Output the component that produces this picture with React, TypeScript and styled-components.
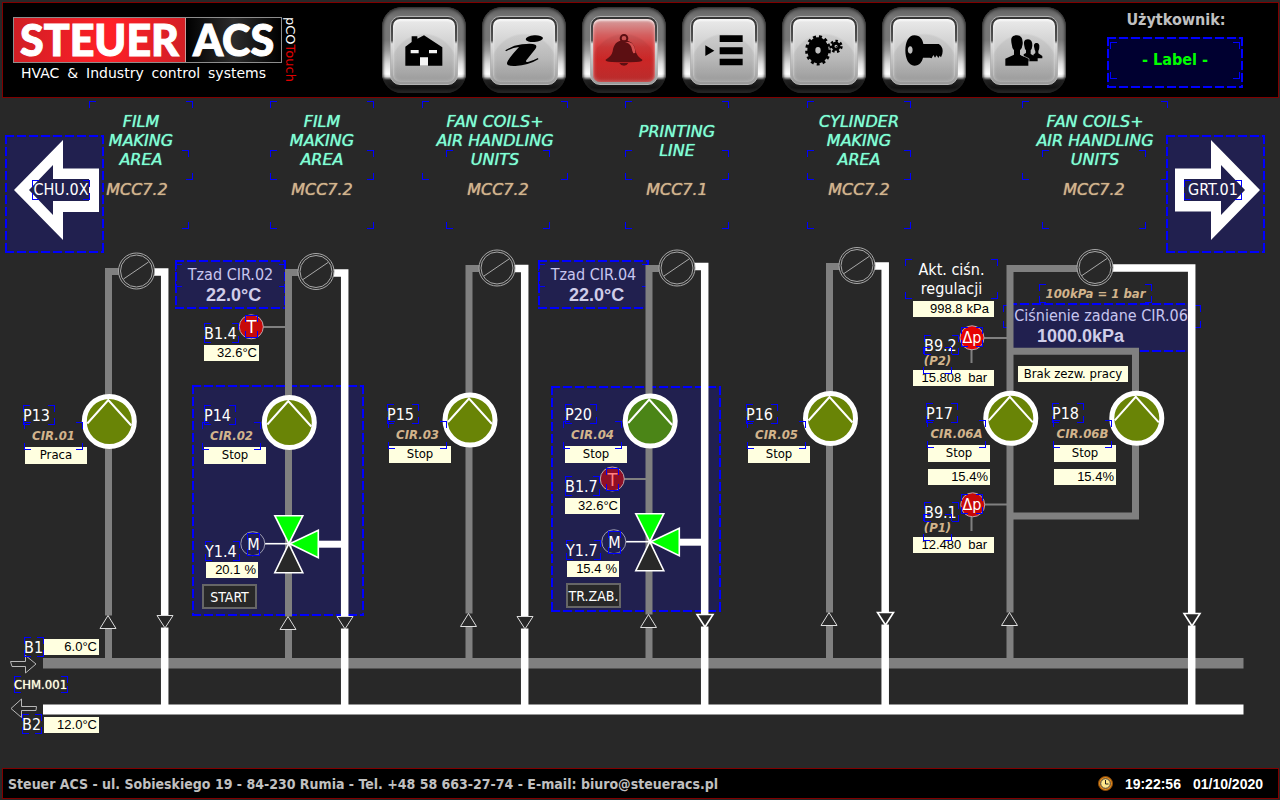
import React from "react";
import styled, { createGlobalStyle, css } from "styled-components";

const UI = '"DejaVu Sans Condensed", "DejaVu Sans", sans-serif';
const WIDE = '"DejaVu Sans", sans-serif';
const DIGITS = '"Liberation Sans", Arial, sans-serif';
const BG = "#282828";
const PANEL = "#21204f";
const BLUE = "#0000ff";
const TAN = "#d2b48c";

const GlobalStyle = createGlobalStyle`
  * { box-sizing: border-box; }
  body { margin: 0; background: ${BG}; color: #fff; font-family: ${UI}; font-size: 16px; }
  button { font: inherit; color: inherit; padding: 0; border: 0; cursor: pointer; }
`;

/* Eight short strokes that mark the four corners of a field */
const corners = css`
  background-image: ${Array(8).fill(`linear-gradient(${BLUE}, ${BLUE})`).join(", ")};
  background-repeat: no-repeat;
  background-size: 7px 1px, 1px 7px, 7px 1px, 1px 7px, 7px 1px, 1px 7px, 7px 1px, 1px 7px;
  background-position: 0 0, 0 0, 100% 0, 100% 0, 0 100%, 0 100%, 100% 100%, 100% 100%;
`;

/* Two pixel dashed outline drawn on the panel's own background */
const dashes = css`
  background-image:
    repeating-linear-gradient(90deg, ${BLUE} 0 9px, transparent 9px 12px),
    repeating-linear-gradient(90deg, ${BLUE} 0 9px, transparent 9px 12px),
    repeating-linear-gradient(180deg, ${BLUE} 0 9px, transparent 9px 12px),
    repeating-linear-gradient(180deg, ${BLUE} 0 9px, transparent 9px 12px);
  background-repeat: no-repeat;
  background-size: 100% 2px, 100% 2px, 2px 100%, 2px 100%;
  background-position: 0 0, 0 100%, 0 0, 100% 0;
`;

const Page = styled.div`
  min-height: 100vh;
  display: flex;
  flex-direction: column;
`;

/* ---------- header ---------- */

const Header = styled.header`
  margin: 2px 1px 0 2px;
  border: 1px solid #800000;
  background: #000;
  display: flex;
  align-items: flex-start;
  padding: 4px 35px 4px 10px;
`;

const Brand = styled.div`
  display: flex;
  align-items: flex-start;
  gap: 3px;
  padding-top: 10px;
  margin-right: auto;
`;

const LogoBox = styled.div`
  display: flex;
  height: 46px;
  border: 1px solid #8d8d8d;
`;

const LogoWord = styled.span<{ $dark?: boolean }>`
  display: flex;
  align-items: center;
  justify-content: center;
  width: ${(p) => (p.$dark ? 95 : 172)}px;
  border-right: ${(p) => (p.$dark ? "0" : "1px solid #c99")};
  background: ${(p) =>
    p.$dark
      ? "linear-gradient(90deg, #000 0, #2c2c2c 50%, #000 100%)"
      : "linear-gradient(100deg, #cf1f25 0, #ff1f27 55%, #cf1f25 100%)"};
  font: 900 43px/44px Lato, sans-serif;
  -webkit-text-stroke: 1px #fff;
`;

const Tagline = styled.div`
  display: flex;
  justify-content: space-between;
  margin: 1px 16px 0 8px;
  font: 14px/18px ${WIDE};
`;

const Product = styled.div`
  writing-mode: vertical-rl;
  font: 13px/11px ${WIDE};
  span { color: #e00000; }
`;

const Toolbar = styled.nav`
  display: flex;
  gap: 16px;
`;

const Key = styled.button`
  width: 84px;
  height: 86px;
  padding: 9px 8px 8px;
  border-radius: 20px;
  background: linear-gradient(#5a5a5a 0, #777 12%, #777 38%, #999 50%, #ddd 66%, #fff 78%, #ddd 81%, #222 85%, #111 94%, #2a2a2a 100%);
  box-shadow: inset 0 0 3px 1px #222;
`;

const KeyRing = styled.span`
  display: block;
  height: 69px;
  padding: 2px;
  border: 1px solid #b4b4b4;
  border-radius: 10px;
  background: linear-gradient(#333 0, #555 35%, #ddd 40%, #999 100%);
`;

const KeyFace = styled.span<{ $alarm?: boolean }>`
  height: 63px;
  display: flex;
  align-items: center;
  justify-content: center;
  border-radius: 7px;
  box-shadow: inset 0 2px 2px rgba(255, 255, 255, 0.6), inset 0 0 4px rgba(255, 255, 255, 0.4);
  background:
    radial-gradient(ellipse 36px 40px at 50% 86%, rgba(0, 0, 0, 0.06) 95%, transparent 100%),
    ${(p) =>
      p.$alarm
        ? "linear-gradient(#d6a0a0 0, #d46060 25%, #d43a3a 45%, #d82828 65%, #c43030 100%)"
        : "linear-gradient(#eaeaea 0, #d4d4d4 35%, #c6c6c6 60%, #a4a4a4 100%)"};
`;

const UserPanel = styled.div`
  width: 136px;
  margin-left: 41px;
  text-align: center;
  font-weight: bold;
  line-height: 26px;
`;

const UserCaption = styled.div`
  color: #c0c0c0;
  margin: 0 0 4px 2px;
`;

const UserField = styled.button`
  display: block;
  width: 100%;
  height: 51px;
  padding: 5px 3px 9px;
  background-color: #000030;
  ${dashes}
`;

const UserName = styled.span`
  display: block;
  height: 37px;
  line-height: 36px;
  font-weight: bold;
  color: #00ff00;
  ${corners}
`;

/* ---------- schematic ---------- */

const Stage = styled.main`
  position: relative;
  flex: 1;
  min-height: 670px;
  overflow: hidden;
`;

const Drawing = styled.svg`
  position: absolute;
  left: 0;
  top: 0;
`;

interface Place { $x: number; $y: number; $w?: number; $h?: number }

/* Schematic coordinates count from the top of the screen; the stage starts below the header */
const STAGE_TOP = 98;

const place = css<Place>`
  position: absolute;
  left: ${(p) => p.$x}px;
  top: ${(p) => p.$y - STAGE_TOP}px;
  width: ${(p) => (p.$w ? p.$w + "px" : "auto")};
  height: ${(p) => (p.$h ? p.$h + "px" : "auto")};
`;

const Region = styled.div<Place>`
  ${place}
  background-color: ${PANEL};
  ${dashes}
`;

const Field = styled.div<Place & { $center?: boolean }>`
  ${place}
  display: flex;
  align-items: center;
  justify-content: ${(p) => (p.$center ? "center" : "flex-start")};
  text-align: center;
  line-height: 19px;
  white-space: pre;
  ${corners}
`;

const AreaTitle = styled(Field)`
  font-family: ${WIDE};
  font-style: italic;
  color: #7fffd4;
  text-shadow: 0 0 1px currentColor;
`;

const Cabinet = styled(AreaTitle)`
  color: ${TAN};
`;

const Tag = styled(Field)`
  font-size: 13px;
  font-weight: bold;
  font-style: italic;
  line-height: 16px;
  color: ${TAN};
`;

const SmallField = styled(Field)`
  font-size: 13px;
  color: #ffffe0;
  text-shadow: 0 0 1px currentColor;
`;

const Letter = styled(Field)<{ $dim?: boolean; $large?: boolean }>`
  color: ${(p) => (p.$dim ? "#ff8080" : "#fff")};
  font-size: ${(p) => (p.$large ? 18 : 16)}px;
`;

const Value = styled.output<Place & { $gap?: number; $pad?: number }>`
  ${place}
  display: flex;
  justify-content: flex-end;
  gap: ${(p) => p.$gap ?? 4}px;
  padding: 0 ${(p) => p.$pad ?? 2}px 0 2px;
  background: #ffffe0;
  color: #000;
  font: 13px/16px ${DIGITS};
  white-space: nowrap;
`;

const State = styled(Value)`
  justify-content: center;
  font-family: ${UI};
`;

const Setpoint = styled.button<Place>`
  ${place}
  display: flex;
  flex-direction: column;
  align-items: flex-start;
  background-color: ${PANEL};
  color: #c8c6f0;
  ${dashes}
`;

const SetpointName = styled.span<{ $plain?: boolean }>`
  align-self: stretch;
  margin-top: ${(p) => (p.$plain ? 2 : 4)}px;
  padding-left: ${(p) => (p.$plain ? 4 : 0)}px;
  height: 23px;
  line-height: 21px;
  white-space: nowrap;
  ${(p) => !p.$plain && corners}
`;

const SetpointValue = styled.span<{ $indent: number }>`
  font: bold 18px/16px ${DIGITS};
  color: #d0cee8;
  padding-left: ${(p) => p.$indent}px;
`;

const CommandButton = styled.button<Place>`
  ${place}
  border: 2px solid #666;
  background: ${BG};
  font-size: 14px;
  line-height: 20px;
  white-space: nowrap;
`;

const NavButton = styled.button<Place>`
  ${place}
  background-color: ${PANEL};
  ${dashes}
`;

const NavLabel = styled.span<{ $left: number }>`
  position: absolute;
  left: ${(p) => p.$left}px;
  top: 45px;
  width: 58px;
  height: 20px;
  line-height: 20px;
  ${corners}
`;

/* ---------- footer ---------- */

const Footer = styled.footer`
  margin: 0 1px 1px 2px;
  height: 31px;
  border: 1px solid #800000;
  background: #000;
  display: flex;
  align-items: center;
  padding: 0 15px 0 5px;
  gap: 12px;
  font-size: 14px;
  font-weight: bold;
`;

const Address = styled.address`
  font-style: normal;
  color: #c0c0c0;
  margin-right: auto;
`;

const Clock = styled.time`
  font-family: ${DIGITS};
`;

/* ---------- icons ---------- */

const gearTeeth = (r: number, n: number) => `${(Math.PI * r) / n} ${(Math.PI * r) / n}`;

const glyphs: { name: string; art: React.ReactNode }[] = [
  {
    name: "Home",
    art: (
      <>
        <path d="M105 196V139L124 125V108H141V115L161 105L216 141V196Z" />
        <path d="M121 149h24v10h-24zM176 149h24v10h-24zM149 171h24v25h-24z" fill="#f4f4f4" />
      </>
    ),
  },
  {
    name: "Info",
    art: (
      <>
        <ellipse cx="192" cy="115" rx="26" ry="10" transform="rotate(-4 192 115)" />
        <path d="M105 150Q125 136 155 132Q185 128 195 133Q201 137 195 146L168 180Q164 187 175 184Q190 180 203 173L204 177Q175 195 135 197Q108 198 110 188Q113 178 128 160L146 140Q126 142 107 153Z" />
      </>
    ),
  },
  {
    name: "Alarms",
    art: (
      <g fill="#5c0f12">
        <circle cx="161" cy="114" r="10" fill="none" stroke="#5c0f12" strokeWidth="6" />
        <path d="M161 120C137 120 130 135 127 153Q124 168 106 178Q103 183 125 185Q161 187 197 185Q219 183 216 178Q199 168 195 150Q190 120 161 120Z" />
        <path d="M164 126Q178 128 183 140Q186 154 189 159L195 158Q194 136 184 129Q175 123 164 126Z" fill="#d65050" />
        <path d="M147 188H174Q170 196 161 196Q151 196 147 188Z" />
      </g>
    ),
  },
  {
    name: "Menu",
    art: <path d="M105 135L132 151L105 167ZM148 105h69v20h-69zM148 141h69v21h-69zM148 175h69v20h-69z" />,
  },
  {
    name: "Settings",
    art: (
      <>
        <path fillRule="evenodd" d="M111 150a32 39 0 1 0 64 0a32 39 0 1 0-64 0ZM135 150a8 10 0 1 1 16 0a8 10 0 1 1-16 0Z" />
        <ellipse cx="143" cy="150" rx="34" ry="41" fill="none" stroke="#000" strokeWidth="9" strokeDasharray={gearTeeth(37, 13)} />
        <circle cx="197" cy="138" r="9" fill="none" stroke="#000" strokeWidth="9" />
        <circle cx="197" cy="138" r="16" fill="none" stroke="#000" strokeWidth="8" strokeDasharray={gearTeeth(16, 7)} />
        <circle cx="198" cy="139" r="2" />
      </>
    ),
  },
  {
    name: "Login",
    art: (
      <path
        fillRule="evenodd"
        d="M132 105C150 105 157 118 159 131H205Q217 138 217 152Q217 163 212 171L208 166L204 173L199 165L194 172L189 164L184 174L178 172H158C155 184 148 196 132 196C114 196 105 174 105 150C105 126 114 105 132 105ZM120 138C110 138 110 160 120 160C129 160 129 138 120 138Z"
      />
    ),
  },
  {
    name: "Users",
    art: (
      <>
        <path d="M199 128C190 128 190 136 192 143Q193 150 195 152V158L189 163V174H216V167L204 159V152Q207 148 207 140Q208 129 199 128Z" />
        <path d="M173 117C160 117 160 126 162 137Q163 146 167 150V158L160 162V183H202V173L181 161V150Q185 146 186 136Q187 118 173 117Z" />
        <path d="M140 105C122 105 121 117 124 131Q125 144 131 150V163L105 175V196H174V176L149 163V150Q156 144 157 131Q159 106 140 105Z" />
        <path d="M151 163L176 175V183" fill="none" stroke="#bbb" strokeWidth="2" />
      </>
    ),
  },
];

/* ---------- diagram parts ---------- */

const Pump = ({ x, y, fill = "#698406" }: { x: number; y: number; fill?: string }) => (
  <g transform={`translate(${x} ${y})`} stroke="#fff">
    <circle r="25" fill={fill} strokeWidth="5" />
    <path d="M-22 2L-1 -21.5L22 4" fill="none" strokeWidth="2" />
  </g>
);

const Exchanger = ({ x, y }: { x: number; y: number }) => (
  <g transform={`translate(${x} ${y})`} fill={BG} stroke="#a8a8a8">
    <circle r="18" />
    <circle r="16" />
    <path d="M-13 8L12 -9" />
  </g>
);

const Mixer = ({ x, y }: { x: number; y: number }) => (
  <g transform={`translate(${x} ${y})`} stroke="#fff" strokeWidth="1.6">
    <path d="M30 0.5H53" strokeWidth="7" />
    <path d="M-24 0H0" />
    <path d="M-14 -28H14L0 0Z" fill="#00ff00" />
    <path d="M-14 29H14L0 0Z" fill={BG} />
    <path d="M29.5 -13.5V14L1 0Z" fill="#00ff00" />
    <circle cx="-36" r="12" fill="none" stroke="#9a9ab0" strokeWidth="1" />
  </g>
);

const Flow = ({ x, y, down, bright }: { x: number; y: number; down?: boolean; bright?: boolean }) => (
  <path
    transform={`translate(${x} ${y})`}
    d={down ? "M-8 0H8L0 12.5Z" : "M-8 13H8L0 0Z"}
    fill={BG}
    stroke={bright ? "#fff" : "#ddd"}
    strokeWidth={bright ? 1.6 : 1}
  />
);

const Sensor = ({ x, y, fill }: { x: number; y: number; fill: string }) => (
  <circle cx={x} cy={y} r="12" fill={fill} stroke="#b8a8b0" />
);

interface Circuit {
  title: string; cabinet: string; tx: number; tw: number; cx: number;
  grey: number; white: number; greyTop: number; whiteTop: number; ex: number; ey: number;
  px: number; py: number; fill?: string; upY: number; downY: number;
}

const circuits: Circuit[] = [
  { title: "FILM\nMAKING\nAREA", cabinet: "MCC7.2", tx: 89, tw: 104, cx: 85, grey: 105, white: 161, greyTop: 268, whiteTop: 268, ex: 136.5, ey: 271, px: 109.3, py: 421.5, upY: 615.5, downY: 615.5 },
  { title: "FILM\nMAKING\nAREA", cabinet: "MCC7.2", tx: 270, tw: 104, cx: 270, grey: 285, white: 341, greyTop: 269, whiteTop: 269, ex: 316, ey: 271.5, px: 289.3, py: 422.5, upY: 616.5, downY: 616.5 },
  { title: "FAN COILS+\nAIR HANDLING\nUNITS", cabinet: "MCC7.2", tx: 422, tw: 146, cx: 446, grey: 465.5, white: 521, greyTop: 265, whiteTop: 264.5, ex: 497, ey: 268, px: 470, py: 420, upY: 613.5, downY: 616.5 },
  { title: "PRINTING\nLINE", cabinet: "MCC7.1", tx: 625, tw: 104, cx: 625, grey: 645.5, white: 701, greyTop: 265, whiteTop: 262.5, ex: 677, ey: 268, px: 650.2, py: 421, fill: "#4b8517", upY: 614.5, downY: 614.5 },
  { title: "CYLINDER\nMAKING\nAREA", cabinet: "MCC7.2", tx: 807, tw: 104, cx: 807, grey: 826, white: 881.5, greyTop: 263, whiteTop: 262, ex: 857, ey: 265.5, px: 830.5, py: 418.5, upY: 612.5, downY: 612.5 },
  { title: "FAN COILS+\nAIR HANDLING\nUNITS", cabinet: "MCC7.2", tx: 1022, tw: 146, cx: 1042, grey: 1006.5, white: 1188, greyTop: 265, whiteTop: 264, ex: 1095, ey: 267.5, px: 1010.8, py: 418.3, upY: 612.5, downY: 613.5 },
];

const pumps = [
  { name: "P13", tag: "CIR.01", state: "Praca", x: 23, y: 405, tagX: 24, stateX: 25 },
  { name: "P14", tag: "CIR.02", state: "Stop", x: 204, y: 405, tagX: 202, stateX: 204 },
  { name: "P15", tag: "CIR.03", state: "Stop", x: 387, y: 404, tagX: 388, stateX: 389 },
  { name: "P20", tag: "CIR.04", state: "Stop", x: 565, y: 404, tagX: 563, stateX: 565 },
  { name: "P16", tag: "CIR.05", state: "Stop", x: 746, y: 404, tagX: 747, stateX: 748 },
  { name: "P17", tag: "CIR.06A", state: "Stop", x: 926, y: 403, tagX: 927, stateX: 928, load: "15.4" },
  { name: "P18", tag: "CIR.06B", state: "Stop", x: 1052, y: 403, tagX: 1053, stateX: 1054, load: "15.4" },
];

const points = [
  { name: "B1.4", x: 204, y: 323 },
  { name: "B1.7", x: 565, y: 476 },
  { name: "Y1.4", x: 205, y: 541 },
  { name: "Y1.7", x: 566, y: 540 },
  { name: "B9.2", x: 924, y: 335 },
  { name: "B9.1", x: 924, y: 502 },
];

const readings = [
  { value: "32.6°C", x: 204, y: 345, w: 55 },
  { value: "32.6°C", x: 565, y: 498, w: 55 },
  { value: "6.0°C", x: 44, y: 639, w: 55 },
  { value: "12.0°C", x: 44, y: 717, w: 55 },
  { value: "20.1", unit: "%", x: 206, y: 562, w: 52 },
  { value: "15.4", unit: "%", x: 567, y: 561, w: 52 },
  { value: "998.8", unit: "kPa", x: 913, y: 301, w: 81, pad: 5 },
  { value: "15.808", unit: "bar", x: 913, y: 370, w: 81, pad: 7, gap: 7 },
  { value: "12.480", unit: "bar", x: 913, y: 537, w: 81, pad: 7, gap: 7 },
];

export default function App() {
  return (
    <Page>
      <GlobalStyle />
      <Header>
        <Brand>
          <div>
            <LogoBox>
              <LogoWord>STEUER</LogoWord>
              <LogoWord $dark>ACS</LogoWord>
            </LogoBox>
            <Tagline>
              <span>HVAC</span>
              <span>&amp;</span>
              <span>Industry</span>
              <span>control</span>
              <span>systems</span>
            </Tagline>
          </div>
          <Product>pCO<span>Touch</span></Product>
        </Brand>
        <Toolbar>
          {glyphs.map((g) => (
            <Key key={g.name} type="button" aria-label={g.name}>
              <KeyRing>
                <KeyFace $alarm={g.name === "Alarms"}>
                  <svg width="40" height="33" viewBox="101 101 120 99">{g.art}</svg>
                </KeyFace>
              </KeyRing>
            </Key>
          ))}
        </Toolbar>
        <UserPanel>
          <UserCaption>Użytkownik:</UserCaption>
          <UserField type="button">
            <UserName>- Label -</UserName>
          </UserField>
        </UserPanel>
      </Header>

      <Stage>
        <Region $x={192} $y={385} $w={172} $h={231} />
        <Region $x={551} $y={386} $w={170} $h={226} />

        <Setpoint type="button" $x={175} $y={260} $w={111} $h={49}>
          <SetpointName>Tzad CIR.02</SetpointName>
          <SetpointValue $indent={31}>22.0°C</SetpointValue>
        </Setpoint>
        <Setpoint type="button" $x={538} $y={260} $w={111} $h={49}>
          <SetpointName>Tzad CIR.04</SetpointName>
          <SetpointValue $indent={31}>22.0°C</SetpointValue>
        </Setpoint>
        <Setpoint type="button" $x={1008} $y={303} $w={182} $h={49}>
          <SetpointName $plain>Ciśnienie zadane CIR.06</SetpointName>
          <SetpointValue $indent={29}>1000.0kPa</SetpointValue>
        </Setpoint>
        <Field $x={1003} $y={305} $w={198} $h={23} />

        <Drawing width="1280" height="670" viewBox="0 98 1280 670" aria-hidden="true">
          <path d="M43 663.3H1243.5" stroke="#808080" strokeWidth="10.5" />
          <path d="M43 709.6H1243.5" stroke="#fff" strokeWidth="10" />
          <g stroke="#808080" fill="none">
            <path d="M1010 351.3H1135.5V516H1010" strokeWidth="7" />
            <path d="M262 327H286M624 479H646M984 338H1007M984 504.5H1007M971.5 350V363M971.5 517V531" strokeWidth="2" />
          </g>
          {circuits.map((c) => (
            <g key={c.grey}>
              <path d={`M${c.ex - 17} ${c.greyTop + 3.5}H${c.grey + 3.5}V660`} fill="none" stroke="#808080" strokeWidth="7" />
              <path d={`M${c.ex + 17} ${c.whiteTop + 4}H${c.white + 3.7}V706`} fill="none" stroke="#fff" strokeWidth="7.5" />
              <path d={`M${c.grey + 3.5} ${c.upY}v13M${c.white + 4} ${c.downY}v12`} stroke={BG} strokeWidth="9" />
              <Exchanger x={c.ex} y={c.ey} />
              <Flow x={c.grey + 3} y={c.upY} />
              <Flow x={c.white + 4} y={c.downY} down bright={c.white > 600} />
            </g>
          ))}
          <Mixer x={288.8} y={543.7} />
          <Mixer x={649.8} y={541.7} />
          {circuits.map((c) => <Pump key={c.px} x={c.px} y={c.py} fill={c.fill} />)}
          <Pump x={1136.8} y={418.3} />
          <Sensor x={251.3} y={326.8} fill="#c80a0a" />
          <Sensor x={612.3} y={479} fill="#8f0f26" />
          <Sensor x={972} y={337.8} fill="#e60202" />
          <Sensor x={972.7} y={504.8} fill="#c80808" />
          <g fill="none" stroke="#b8b8b8">
            <path d="M10.5 661.5H25.5V655.5L36 664L25.5 673V666.5H12Z" />
            <path d="M11 708.5L21.5 699V706.5H36.5L36 710.5H21.5V717.5Z" />
          </g>
        </Drawing>

        {circuits.map((c) => (
          <React.Fragment key={c.px}>
            <AreaTitle $center $x={c.tx} $y={101} $w={c.tw} $h={79}>{c.title}</AreaTitle>
            <Cabinet $center $x={c.cx} $y={150} $w={104} $h={79}>{c.cabinet}</Cabinet>
          </React.Fragment>
        ))}

        {pumps.map((p) => (
          <React.Fragment key={p.name}>
            <Field $x={p.x} $y={p.y} $w={32} $h={20}>{p.name}</Field>
            <State $x={p.stateX} $y={p.y + 42} $w={62} $h={17}>{p.state}</State>
            <Tag $center $x={p.tagX} $y={p.y + 17} $w={59} $h={28}>{p.tag}</Tag>
            {p.load && <Value $x={p.stateX} $y={p.y + 66} $w={62} $h={16}>{p.load}%</Value>}
          </React.Fragment>
        ))}

        {points.map((p) => (
          <Field key={p.name} $x={p.x} $y={p.y} $w={35} $h={20}>{p.name}</Field>
        ))}

        {readings.map((r) => (
          <Value key={r.x + "-" + r.y} $x={r.x} $y={r.y} $w={r.w} $h={16} $gap={r.gap} $pad={r.pad}>
            <span>{r.value}</span>
            {r.unit && <span>{r.unit}</span>}
          </Value>
        ))}

        <Tag $center $x={923} $y={347} $w={29} $h={27}>(P2)</Tag>
        <Tag $center $x={923} $y={514} $w={29} $h={27}>(P1)</Tag>
        <Tag $center $x={1039} $y={284} $w={113} $h={19}>100kPa = 1 bar</Tag>
        <Field $center $x={905} $y={259} $w={93} $h={40}>{"Akt. ciśn.\nregulacji"}</Field>
        <State $x={1018} $y={366} $w={110} $h={16}>Brak zezw. pracy</State>

        <Letter $center $large $x={245} $y={315} $w={13} $h={23}>T</Letter>
        <Letter $center $large $dim $x={606} $y={468} $w={13} $h={23}>T</Letter>
        <Letter $center $x={247} $y={533} $w={13} $h={23}>M</Letter>
        <Letter $center $x={608} $y={531} $w={13} $h={23}>M</Letter>
        <Letter $center $x={961} $y={327} $w={22} $h={20}>Δp</Letter>
        <Letter $center $x={961} $y={494} $w={22} $h={20}>Δp</Letter>

        <Field $x={24} $y={637} $w={20} $h={20}>B1</Field>
        <Field $x={22} $y={714} $w={20} $h={20}>B2</Field>
        <SmallField $x={14} $y={676} $w={54} $h={17}>CHM.001</SmallField>

        <CommandButton type="button" $x={202} $y={584} $w={55} $h={25}>START</CommandButton>
        <CommandButton type="button" $x={566} $y={583} $w={55} $h={25}>TR.ZAB.</CommandButton>

        <NavButton type="button" $x={5} $y={135} $w={99} $h={118}>
          <svg width="99" height="118" viewBox="5 135 99 118" aria-hidden="true">
            <path fill="#fff" fillRule="evenodd" d="M14 190L63 140V168.5H99V212H63V240ZM29 190L53 215V201H89V179H53V165Z" />
          </svg>
          <NavLabel $left={27}>CHU.0X</NavLabel>
        </NavButton>
        <NavButton type="button" $x={1166} $y={135} $w={99} $h={118}>
          <svg width="99" height="118" viewBox="1166 135 99 118" aria-hidden="true">
            <path fill="#fff" fillRule="evenodd" d="M1260 190L1211 140V168.5H1175V211.5H1211V240ZM1245 190L1221 215V201H1184V179H1221V165Z" />
          </svg>
          <NavLabel $left={18}>GRT.01</NavLabel>
        </NavButton>
      </Stage>

      <Footer>
        <Address>Steuer ACS - ul. Sobieskiego 19 - 84-230 Rumia - Tel. +48 58 663-27-74 - E-mail: biuro@steueracs.pl</Address>
        <svg width="15" height="15" viewBox="0 0 15 15" aria-hidden="true">
          <circle cx="7.5" cy="7.5" r="7" fill="#e08a1e" stroke="#8a4a08" />
          <circle cx="7.5" cy="7.5" r="4.8" fill="#ffe88a" stroke="#444" />
          <path d="M7.5 4V8H10.5" fill="none" stroke="#222" />
        </svg>
        <Clock>19:22:56</Clock>
        <Clock>01/10/2020</Clock>
      </Footer>
    </Page>
  );
}
